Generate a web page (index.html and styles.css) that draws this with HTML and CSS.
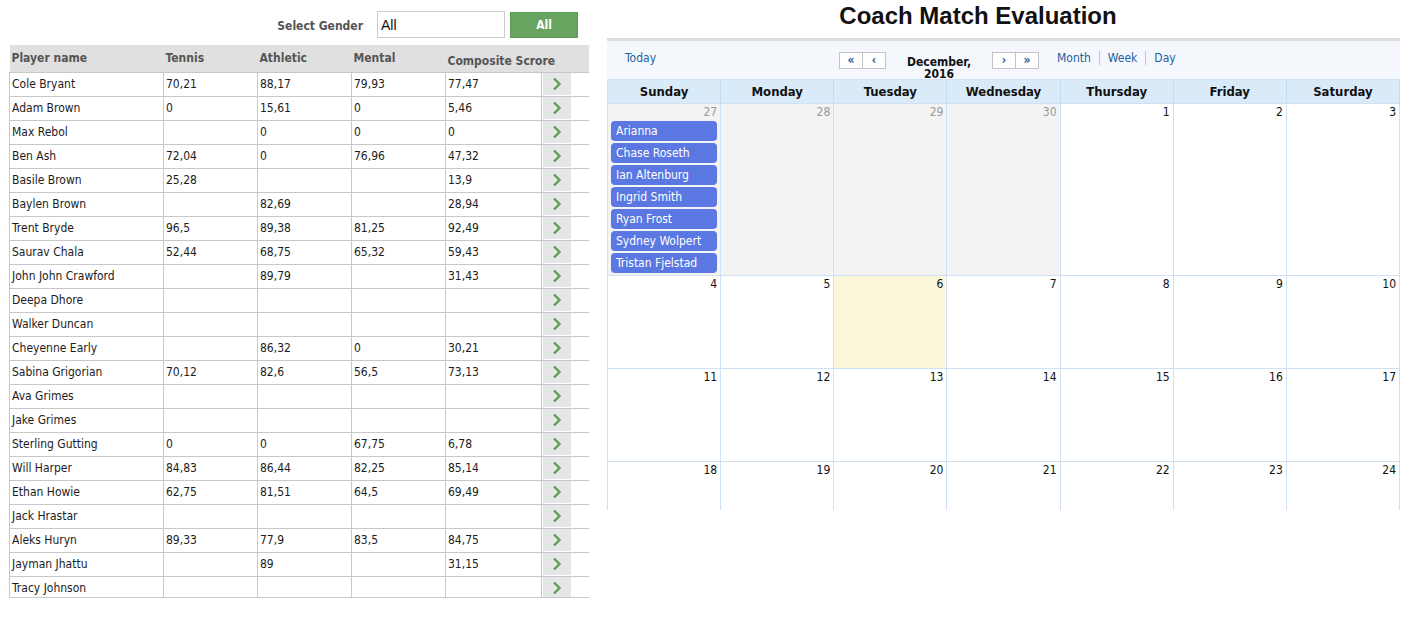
FILE: index.html
```html
<!DOCTYPE html>
<html>
<head>
<meta charset="utf-8">
<title>Coach Match Evaluation</title>
<link rel="stylesheet" href="styles.css">
</head>
<body>
<div class="page">
  <section class="left">
    <div class="filter">
      <label class="filter-label">Select Gender</label>
      <input class="filter-input" type="text" value="All">
      <button class="filter-btn">All</button>
    </div>
    <div class="grid-wrap">
      <table class="players">
        <colgroup>
          <col class="c-name"><col class="c-num"><col class="c-num"><col class="c-num"><col class="c-comp"><col class="c-btn">
        </colgroup>
        <thead>
          <tr><th>Player name</th><th>Tennis</th><th>Athletic</th><th>Mental</th><th colspan="2" class="th-comp">Composite Scrore</th></tr>
        </thead>
        <tbody>
          <tr><td>Cole Bryant</td><td>70,21</td><td>88,17</td><td>79,93</td><td>77,47</td><td><span class="go"><svg viewBox="0 0 10 14" width="10" height="14"><path d="M2 1.5 L7.5 7 L2 12.5" /></svg></span></td></tr>
          <tr><td>Adam Brown</td><td>0</td><td>15,61</td><td>0</td><td>5,46</td><td><span class="go"><svg viewBox="0 0 10 14" width="10" height="14"><path d="M2 1.5 L7.5 7 L2 12.5" /></svg></span></td></tr>
          <tr><td>Max Rebol</td><td></td><td>0</td><td>0</td><td>0</td><td><span class="go"><svg viewBox="0 0 10 14" width="10" height="14"><path d="M2 1.5 L7.5 7 L2 12.5" /></svg></span></td></tr>
          <tr><td>Ben Ash</td><td>72,04</td><td>0</td><td>76,96</td><td>47,32</td><td><span class="go"><svg viewBox="0 0 10 14" width="10" height="14"><path d="M2 1.5 L7.5 7 L2 12.5" /></svg></span></td></tr>
          <tr><td>Basile Brown</td><td>25,28</td><td></td><td></td><td>13,9</td><td><span class="go"><svg viewBox="0 0 10 14" width="10" height="14"><path d="M2 1.5 L7.5 7 L2 12.5" /></svg></span></td></tr>
          <tr><td>Baylen Brown</td><td></td><td>82,69</td><td></td><td>28,94</td><td><span class="go"><svg viewBox="0 0 10 14" width="10" height="14"><path d="M2 1.5 L7.5 7 L2 12.5" /></svg></span></td></tr>
          <tr><td>Trent Bryde</td><td>96,5</td><td>89,38</td><td>81,25</td><td>92,49</td><td><span class="go"><svg viewBox="0 0 10 14" width="10" height="14"><path d="M2 1.5 L7.5 7 L2 12.5" /></svg></span></td></tr>
          <tr><td>Saurav Chala</td><td>52,44</td><td>68,75</td><td>65,32</td><td>59,43</td><td><span class="go"><svg viewBox="0 0 10 14" width="10" height="14"><path d="M2 1.5 L7.5 7 L2 12.5" /></svg></span></td></tr>
          <tr><td>John John Crawford</td><td></td><td>89,79</td><td></td><td>31,43</td><td><span class="go"><svg viewBox="0 0 10 14" width="10" height="14"><path d="M2 1.5 L7.5 7 L2 12.5" /></svg></span></td></tr>
          <tr><td>Deepa Dhore</td><td></td><td></td><td></td><td></td><td><span class="go"><svg viewBox="0 0 10 14" width="10" height="14"><path d="M2 1.5 L7.5 7 L2 12.5" /></svg></span></td></tr>
          <tr><td>Walker Duncan</td><td></td><td></td><td></td><td></td><td><span class="go"><svg viewBox="0 0 10 14" width="10" height="14"><path d="M2 1.5 L7.5 7 L2 12.5" /></svg></span></td></tr>
          <tr><td>Cheyenne Early</td><td></td><td>86,32</td><td>0</td><td>30,21</td><td><span class="go"><svg viewBox="0 0 10 14" width="10" height="14"><path d="M2 1.5 L7.5 7 L2 12.5" /></svg></span></td></tr>
          <tr><td>Sabina Grigorian</td><td>70,12</td><td>82,6</td><td>56,5</td><td>73,13</td><td><span class="go"><svg viewBox="0 0 10 14" width="10" height="14"><path d="M2 1.5 L7.5 7 L2 12.5" /></svg></span></td></tr>
          <tr><td>Ava Grimes</td><td></td><td></td><td></td><td></td><td><span class="go"><svg viewBox="0 0 10 14" width="10" height="14"><path d="M2 1.5 L7.5 7 L2 12.5" /></svg></span></td></tr>
          <tr><td>Jake Grimes</td><td></td><td></td><td></td><td></td><td><span class="go"><svg viewBox="0 0 10 14" width="10" height="14"><path d="M2 1.5 L7.5 7 L2 12.5" /></svg></span></td></tr>
          <tr><td>Sterling Gutting</td><td>0</td><td>0</td><td>67,75</td><td>6,78</td><td><span class="go"><svg viewBox="0 0 10 14" width="10" height="14"><path d="M2 1.5 L7.5 7 L2 12.5" /></svg></span></td></tr>
          <tr><td>Will Harper</td><td>84,83</td><td>86,44</td><td>82,25</td><td>85,14</td><td><span class="go"><svg viewBox="0 0 10 14" width="10" height="14"><path d="M2 1.5 L7.5 7 L2 12.5" /></svg></span></td></tr>
          <tr><td>Ethan Howie</td><td>62,75</td><td>81,51</td><td>64,5</td><td>69,49</td><td><span class="go"><svg viewBox="0 0 10 14" width="10" height="14"><path d="M2 1.5 L7.5 7 L2 12.5" /></svg></span></td></tr>
          <tr><td>Jack Hrastar</td><td></td><td></td><td></td><td></td><td><span class="go"><svg viewBox="0 0 10 14" width="10" height="14"><path d="M2 1.5 L7.5 7 L2 12.5" /></svg></span></td></tr>
          <tr><td>Aleks Huryn</td><td>89,33</td><td>77,9</td><td>83,5</td><td>84,75</td><td><span class="go"><svg viewBox="0 0 10 14" width="10" height="14"><path d="M2 1.5 L7.5 7 L2 12.5" /></svg></span></td></tr>
          <tr><td>Jayman Jhattu</td><td></td><td>89</td><td></td><td>31,15</td><td><span class="go"><svg viewBox="0 0 10 14" width="10" height="14"><path d="M2 1.5 L7.5 7 L2 12.5" /></svg></span></td></tr>
          <tr><td>Tracy Johnson</td><td></td><td></td><td></td><td></td><td><span class="go"><svg viewBox="0 0 10 14" width="10" height="14"><path d="M2 1.5 L7.5 7 L2 12.5" /></svg></span></td></tr>
        </tbody>
      </table>
    </div>
  </section>

  <section class="right">
    <h1 class="title">Coach Match Evaluation</h1>
    <div class="cal">
      <div class="toolbar">
        <a class="today">Today</a>
        <div class="navgroup">
          <span class="navbtn">&laquo;</span><span class="navbtn">&lsaquo;</span>
        </div>
        <div class="month-title">December, 2016</div>
        <div class="navgroup">
          <span class="navbtn">&rsaquo;</span><span class="navbtn">&raquo;</span>
        </div>
        <div class="views">
          <a class="view">Month</a><a class="view">Week</a><a class="view">Day</a>
        </div>
      </div>
      <div class="dayhead">
        <div>Sunday</div><div>Monday</div><div>Tuesday</div><div>Wednesday</div><div>Thursday</div><div>Friday</div><div>Saturday</div>
      </div>
      <div class="weeks">
        <div class="cell other"><div class="num">27</div>
          <div class="ev">Arianna</div>
          <div class="ev">Chase Roseth</div>
          <div class="ev">Ian Altenburg</div>
          <div class="ev">Ingrid Smith</div>
          <div class="ev">Ryan Frost</div>
          <div class="ev">Sydney Wolpert</div>
          <div class="ev">Tristan Fjelstad</div>
        </div>
        <div class="cell other"><div class="num">28</div></div>
        <div class="cell other"><div class="num">29</div></div>
        <div class="cell other"><div class="num">30</div></div>
        <div class="cell"><div class="num">1</div></div>
        <div class="cell"><div class="num">2</div></div>
        <div class="cell"><div class="num">3</div></div>

        <div class="cell"><div class="num">4</div></div>
        <div class="cell"><div class="num">5</div></div>
        <div class="cell today-cell"><div class="num">6</div></div>
        <div class="cell"><div class="num">7</div></div>
        <div class="cell"><div class="num">8</div></div>
        <div class="cell"><div class="num">9</div></div>
        <div class="cell"><div class="num">10</div></div>

        <div class="cell"><div class="num">11</div></div>
        <div class="cell"><div class="num">12</div></div>
        <div class="cell"><div class="num">13</div></div>
        <div class="cell"><div class="num">14</div></div>
        <div class="cell"><div class="num">15</div></div>
        <div class="cell"><div class="num">16</div></div>
        <div class="cell"><div class="num">17</div></div>

        <div class="cell"><div class="num">18</div></div>
        <div class="cell"><div class="num">19</div></div>
        <div class="cell"><div class="num">20</div></div>
        <div class="cell"><div class="num">21</div></div>
        <div class="cell"><div class="num">22</div></div>
        <div class="cell"><div class="num">23</div></div>
        <div class="cell"><div class="num">24</div></div>
      </div>
    </div>
  </section>
</div>
</body>
</html>
```

FILE: styles.css
```css
* { box-sizing: border-box; }

body {
  margin: 0;
  background: #fff;
  font-family: "DejaVu Sans Condensed", "DejaVu Sans", sans-serif;
  font-size: 12px;
  color: #222;
}

.page {
  display: flex;
  align-items: flex-start;
}

/* ---------- left panel ---------- */
.left {
  width: 580px;
  margin-left: 9px;
}

.filter {
  height: 45px;
  display: flex;
  justify-content: flex-end;
  align-items: flex-start;
  padding-top: 11px;
  padding-right: 11px;
}

.filter-label {
  font-weight: bold;
  color: #555;
  font-size: 12px;
  line-height: 27px;
  padding-top: 2px;
  margin-right: 14px;
}

.filter-input {
  width: 128px;
  height: 27px;
  border: 1px solid #ccc;
  padding: 0 3px;
  font-family: "Liberation Sans", Arial, sans-serif;
  font-size: 14px;
  color: #111;
  margin: 0;
  outline: none;
}

.filter-btn {
  width: 68px;
  height: 26px;
  margin: 1px 0 0 5px;
  border: 1px solid #5e9a56;
  background: #67a45f;
  color: #fff;
  font-family: "DejaVu Sans Condensed", "DejaVu Sans", sans-serif;
  font-weight: bold;
  font-size: 12px;
  padding: 0;
}

.grid-wrap {
  height: 553px;
  overflow: hidden;
  border-bottom: 1px solid #c8c8c8;
}

.players {
  width: 580px;
  border-collapse: collapse;
  table-layout: fixed;
}

.c-name { width: 154px; }
.c-num { width: 94px; }
.c-comp { width: 96px; }
.c-btn { width: 48px; }

.players th {
  height: 27px;
  background: #e0e0e0;
  color: #555;
  font-weight: bold;
  font-size: 12px;
  text-align: left;
  padding: 0 2px;
  border-bottom: 1px solid #c8c8c8;
}

.players th.th-comp {
  padding-top: 6px;
}

.players td {
  height: 24px;
  padding: 0 2px;
  border: 1px solid #c8c8c8;
  font-size: 12px;
  color: #1c1c1c;
  white-space: nowrap;
  vertical-align: middle;
}

.players td:last-child {
  padding: 0 1px;
}

.go {
  display: flex;
  align-items: center;
  justify-content: center;
  width: 28px;
  height: 22px;
  background: #e6e6e6;
}

.go path {
  fill: none;
  stroke: #5ba253;
  stroke-width: 2.4;
  stroke-linecap: butt;
  stroke-linejoin: miter;
}

/* ---------- right panel ---------- */
.right {
  width: 793px;
  margin-left: 18px;
}

.title {
  margin: 0;
  height: 38px;
  padding-right: 51px;
  text-align: center;
  font-family: "Liberation Sans", Arial, sans-serif;
  font-size: 24px;
  font-weight: bold;
  line-height: 32px;
  color: #111;
}

.cal {
  height: 472px;
  overflow: hidden;
  border-top: 3px solid #dcdcdc;
}

.toolbar {
  height: 38px;
  background: #f4f8fd;
  display: flex;
  align-items: flex-start;
  overflow: hidden;
  padding-left: 18px;
}

.today {
  width: 214px;
  color: #23609e;
  font-size: 12px;
  line-height: 14px;
  margin-top: 10px;
}

.navgroup {
  display: flex;
  margin-top: 11px;
}

.navbtn {
  width: 24px;
  height: 17px;
  border: 1px solid #c4c4c4;
  background: #fff;
  color: #23609e;
  font-weight: bold;
  font-size: 12px;
  line-height: 14px;
  text-align: center;
}

.navbtn + .navbtn { margin-left: -1px; }

.month-title {
  width: 106px;
  padding: 0 20px;
  margin-top: 15px;
  text-align: center;
  font-weight: bold;
  font-size: 12px;
  line-height: 12px;
  color: #111;
}

.views {
  display: flex;
  margin-left: 10px;
  margin-top: 10px;
}

.view {
  color: #23609e;
  font-size: 12px;
  line-height: 14px;
  padding: 0 8px;
}

.view + .view {
  border-left: 1px solid #c8c8c8;
}

.dayhead {
  display: grid;
  grid-template-columns: repeat(7, 1fr);
  height: 25px;
  background: #d9eaf9;
  border-top: 1px solid #cfe1f2;
  border-left: 1px solid #cfe1f2;
}

.dayhead div {
  border-right: 1px solid #c5dbee;
  border-bottom: 1px solid #cfe1f2;
  text-align: center;
  font-weight: bold;
  font-size: 13px;
  line-height: 23px;
  color: #111;
}

.weeks {
  display: grid;
  grid-template-columns: repeat(7, 1fr);
  grid-template-rows: 172px 93px 93px 93px;
  border-left: 1px solid #cfe1f2;
}

.cell {
  border-right: 1px solid #cfe1f2;
  border-bottom: 1px solid #cfe1f2;
  padding: 0 3px 0 3px;
}

.cell.other { background: #f3f3f3; }
.cell.other .num { color: #9a9a9a; }
.cell.today-cell { background: #fcf6da; }

.num {
  text-align: right;
  font-size: 12px;
  line-height: 14px;
  padding-top: 1px;
  color: #111;
}

.ev {
  height: 20px;
  margin: 2px 0 2px 0;
  padding-left: 5px;
  border-radius: 4px;
  background: #5b77e2;
  color: #fff;
  font-size: 12px;
  line-height: 20px;
  white-space: nowrap;
  overflow: hidden;
}

.ev + .ev { margin-top: 0; }
```
